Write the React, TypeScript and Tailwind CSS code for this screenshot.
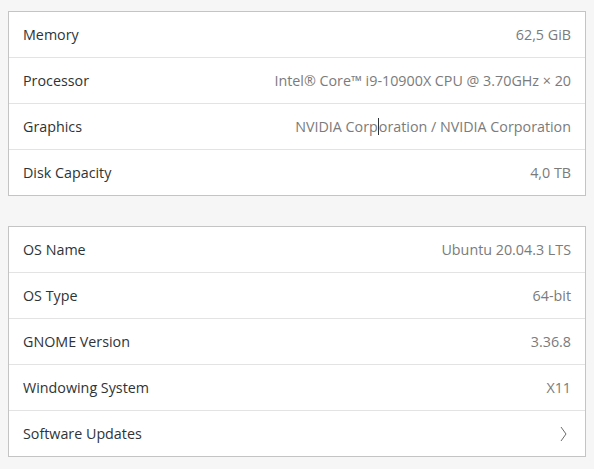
import { ReactNode } from "react";

type Row = { label: string; value: ReactNode };

const hardware: Row[] = [
    { label: "Memory", value: "62,5 GiB" },
    { label: "Processor", value: "Intel® Core™ i9-10900X CPU @ 3.70GHz × 20" },
    {
        label: "Graphics",
        value: (
            <>
                NVIDIA Corp
                <span className="inline-block w-px h-[17px] bg-[#2e3436] align-[-4px]" />
                oration / NVIDIA Corporation
            </>
        ),
    },
    { label: "Disk Capacity", value: "4,0 TB" },
];

const software: Row[] = [
    { label: "OS Name", value: "Ubuntu 20.04.3 LTS" },
    { label: "OS Type", value: "64-bit" },
    { label: "GNOME Version", value: "3.36.8" },
    { label: "Windowing System", value: "X11" },
    {
        label: "Software Updates",
        value: (
            <svg width="8" height="16" viewBox="0 0 8 16" className="mr-[3px]">
                <polyline points="1,1 6,8 1,15" fill="none" stroke="#5a5a5a" strokeWidth="0.9" />
            </svg>
        ),
    },
];

function Card({ rows }: { rows: Row[] }) {
    return (
        <div className="bg-white border border-[#c4c4c4]">
            {rows.map((row, i) => (
                <div key={row.label}>
                    {i > 0 && <div className="h-px bg-[#e3e3e3]" />}
                    <div className="h-[45px] flex items-center justify-between px-[14px]">
                        <span className="text-[#2e3436]">{row.label}</span>
                        <span className="text-[#7b7b7b] flex items-center">{row.value}</span>
                    </div>
                </div>
            ))}
        </div>
    );
}

export default function App() {
    return (
        <div
            className="w-[594px] h-[469px] bg-[#f6f6f6] px-[8px] pt-[11px] flex flex-col gap-[30px] text-[14.3px] overflow-hidden"
            style={{ fontFamily: '"Open Sans", "Noto Sans", sans-serif' }}
        >
            <Card rows={hardware} />
            <Card rows={software} />
        </div>
    );
}
